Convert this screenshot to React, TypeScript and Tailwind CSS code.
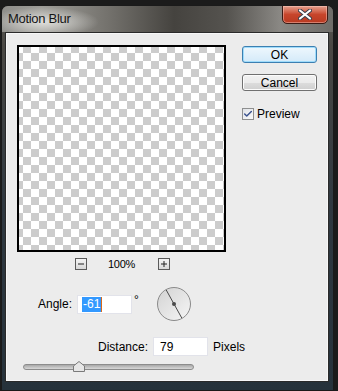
import { Check } from "lucide-react"

const font = { fontFamily: '"Liberation Sans", Arial, sans-serif' }

const Dial = ({ angle }: { angle: number }) => {
  const r = 16
  const rad = (angle * Math.PI) / 180
  const dx = Math.cos(rad) * r
  const dy = -Math.sin(rad) * r
  return (
    <svg width="36" height="36" viewBox="0 0 36 36" className="block">
      <defs>
        <linearGradient id="dialFill" x1="0" y1="0" x2="1" y2="1">
          <stop offset="0" stopColor="#d2d2d2" />
          <stop offset="1" stopColor="#f6f6f6" />
        </linearGradient>
      </defs>
      <circle cx="18" cy="18" r="16.5" fill="url(#dialFill)" stroke="#8a8a8a" strokeWidth="1" />
      <line x1={18 - dx} y1={18 - dy} x2={18 + dx} y2={18 + dy} stroke="#4a4a4a" strokeWidth="1" />
      <circle cx="18" cy="18" r="2" fill="#4a4a4a" />
    </svg>
  )
}

const ZoomBtn = ({ plus }: { plus?: boolean }) => (
  <div className="w-[12px] h-[12px] border border-[#5a5a5a] bg-gradient-to-b from-[#f4f4f4] to-[#d8d8d8] flex items-center justify-center">
    <svg width="8" height="8" viewBox="0 0 8 8" className="block">
      <line x1="1" y1="4" x2="7" y2="4" stroke="#222" strokeWidth="1" />
      {plus && <line x1="4" y1="1" x2="4" y2="7" stroke="#222" strokeWidth="1" />}
    </svg>
  </div>
)

const App = () => {
  return (
    <div className="w-[338px] h-[391px] bg-[#1b1b1b] pt-[5px] pl-[1px] overflow-hidden" style={font}>
      <div className="w-[333px] h-[386px] rounded-t-[7px] border border-[#1a1a1a] flex flex-col bg-[linear-gradient(to_bottom,#5d5b57_0px,#4a4844_40px,#2f3840_200px,#26323b_386px)] overflow-hidden">
        {/* title bar */}
        <div className="h-[26px] flex justify-between bg-[radial-gradient(ellipse_55px_15px_at_42px_16px,rgba(235,235,232,0.85),transparent),linear-gradient(to_right,#8f8e8a_0%,#9d9c97_12%,#74726d_32%,#45433f_52%,#55534f_68%,#8a8884_84%,#6e6c68_100%)]">
          <div className="pl-[6px] pt-[5px] text-[13px] leading-[16px] tracking-[-0.3px] text-[#151515]">Motion Blur</div>
          <div className="mr-[5px] w-[46px] h-[19px] -mt-px rounded-b-[5px] border border-[#3a1a14] bg-gradient-to-b from-[#e4a08e] via-[#c7452b] to-[#b83a22] shadow-[inset_0_0_0_1px_rgba(255,210,200,0.45)] flex items-center justify-center">
            <svg width="14" height="11" viewBox="0 0 14 11" className="block">
              <path d="M2 1.5 L12 9.5 M12 1.5 L2 9.5" stroke="#3a3f4a" strokeWidth="4" strokeLinecap="round" />
              <path d="M2 1.5 L12 9.5 M12 1.5 L2 9.5" stroke="#ffffff" strokeWidth="2.2" strokeLinecap="round" />
            </svg>
          </div>
        </div>

        {/* client area */}
        <div className="ml-[3px] w-[324px] h-[350px] border border-[#2a2a2a] bg-[#ececec] shadow-[inset_0_0_0_1px_#f7f7f7] flex flex-col">
          <div className="flex pt-[12px] pl-[11px]">
            <div className="w-[209px] h-[207px] border-2 border-black bg-[conic-gradient(#cccccc_25%,#ffffff_0_50%,#cccccc_0_75%,#ffffff_0)] bg-[length:16px_16px] bg-[position:-4px_-2px]" />
            <div className="ml-[16px] mt-[1px] flex flex-col">
              <div className="w-[75px] h-[17px] rounded-[3px] border border-[#3c7fb1] bg-gradient-to-b from-[#eef7fd] to-[#d4eaf9] shadow-[inset_0_0_0_1px_#9fdcfb] flex items-center justify-center text-[12px] leading-[14px] text-black">
                OK
              </div>
              <div className="mt-[11px] w-[75px] h-[17px] rounded-[3px] border border-[#707070] bg-[linear-gradient(to_bottom,#f2f2f2_0%,#ebebeb_50%,#dddddd_51%,#cfcfcf_100%)] shadow-[inset_0_0_0_1px_#fcfcfc] flex items-center justify-center text-[12px] leading-[14px] text-black">
                Cancel
              </div>
              <div className="mt-[17px] h-[12px] flex items-center">
                <div className="w-[12px] h-[12px] border border-[#8e8f8f] bg-gradient-to-br from-[#e0e3e8] to-[#fafafa] flex items-center justify-center">
                  <Check size={10} strokeWidth={3.5} className="text-[#3c5490]" />
                </div>
                <span className="ml-[3px] text-[12px] leading-[12px] text-black">Preview</span>
              </div>
            </div>
          </div>

          <div className="flex items-center h-[12px] mt-[6px] ml-[69px]">
            <ZoomBtn />
            <span className="ml-[21px] text-[11px] leading-[12px] tracking-[-0.3px] text-black">100%</span>
            <div className="ml-[23px]">
              <ZoomBtn plus />
            </div>
          </div>

          <div className="flex items-center h-[36px] mt-[16px] ml-[32px]">
            <span className="text-[12px] leading-[14px] text-black">Angle:</span>
            <div className="ml-[5px] w-[55px] h-[19px] bg-white border border-[#e2e3ea] flex items-center pl-[4px]">
              <span className="bg-[#3399ff] text-white text-[12px] leading-[15px] px-[1px]">-61</span>
              <span className="w-[1px] h-[15px] bg-[#d86a1c]" />
            </div>
            <span className="ml-[2px] -mt-[8px] text-[12px] leading-[14px] text-black">°</span>
            <div className="ml-[17px]">
              <Dial angle={-61} />
            </div>
          </div>

          <div className="flex items-center h-[19px] mt-[15px] ml-[92px]">
            <span className="text-[12px] leading-[14px] text-black">Distance:</span>
            <div className="ml-[5px] w-[55px] h-[19px] bg-white border border-[#e2e3ea] flex items-center pl-[6px] text-[12px] leading-[14px] text-black">
              79
            </div>
            <span className="ml-[5px] text-[12px] leading-[14px] text-black">Pixels</span>
          </div>

          <div className="relative mt-[8px] ml-[17px] w-[171px] h-[6px] rounded-full border border-[#8c8c8c] bg-gradient-to-b from-[#a8a8a8] to-[#d8d8d8]">
            <svg className="absolute left-[49px] -top-[4px]" width="12" height="11" viewBox="0 0 12 11">
              <path d="M0.5 10.5 L0.5 5 L6 0.5 L11.5 5 L11.5 10.5 Z" fill="#e6e6e6" stroke="#7a7a7a" strokeWidth="1" />
            </svg>
          </div>
        </div>
      </div>
    </div>
  )
}

export default App
